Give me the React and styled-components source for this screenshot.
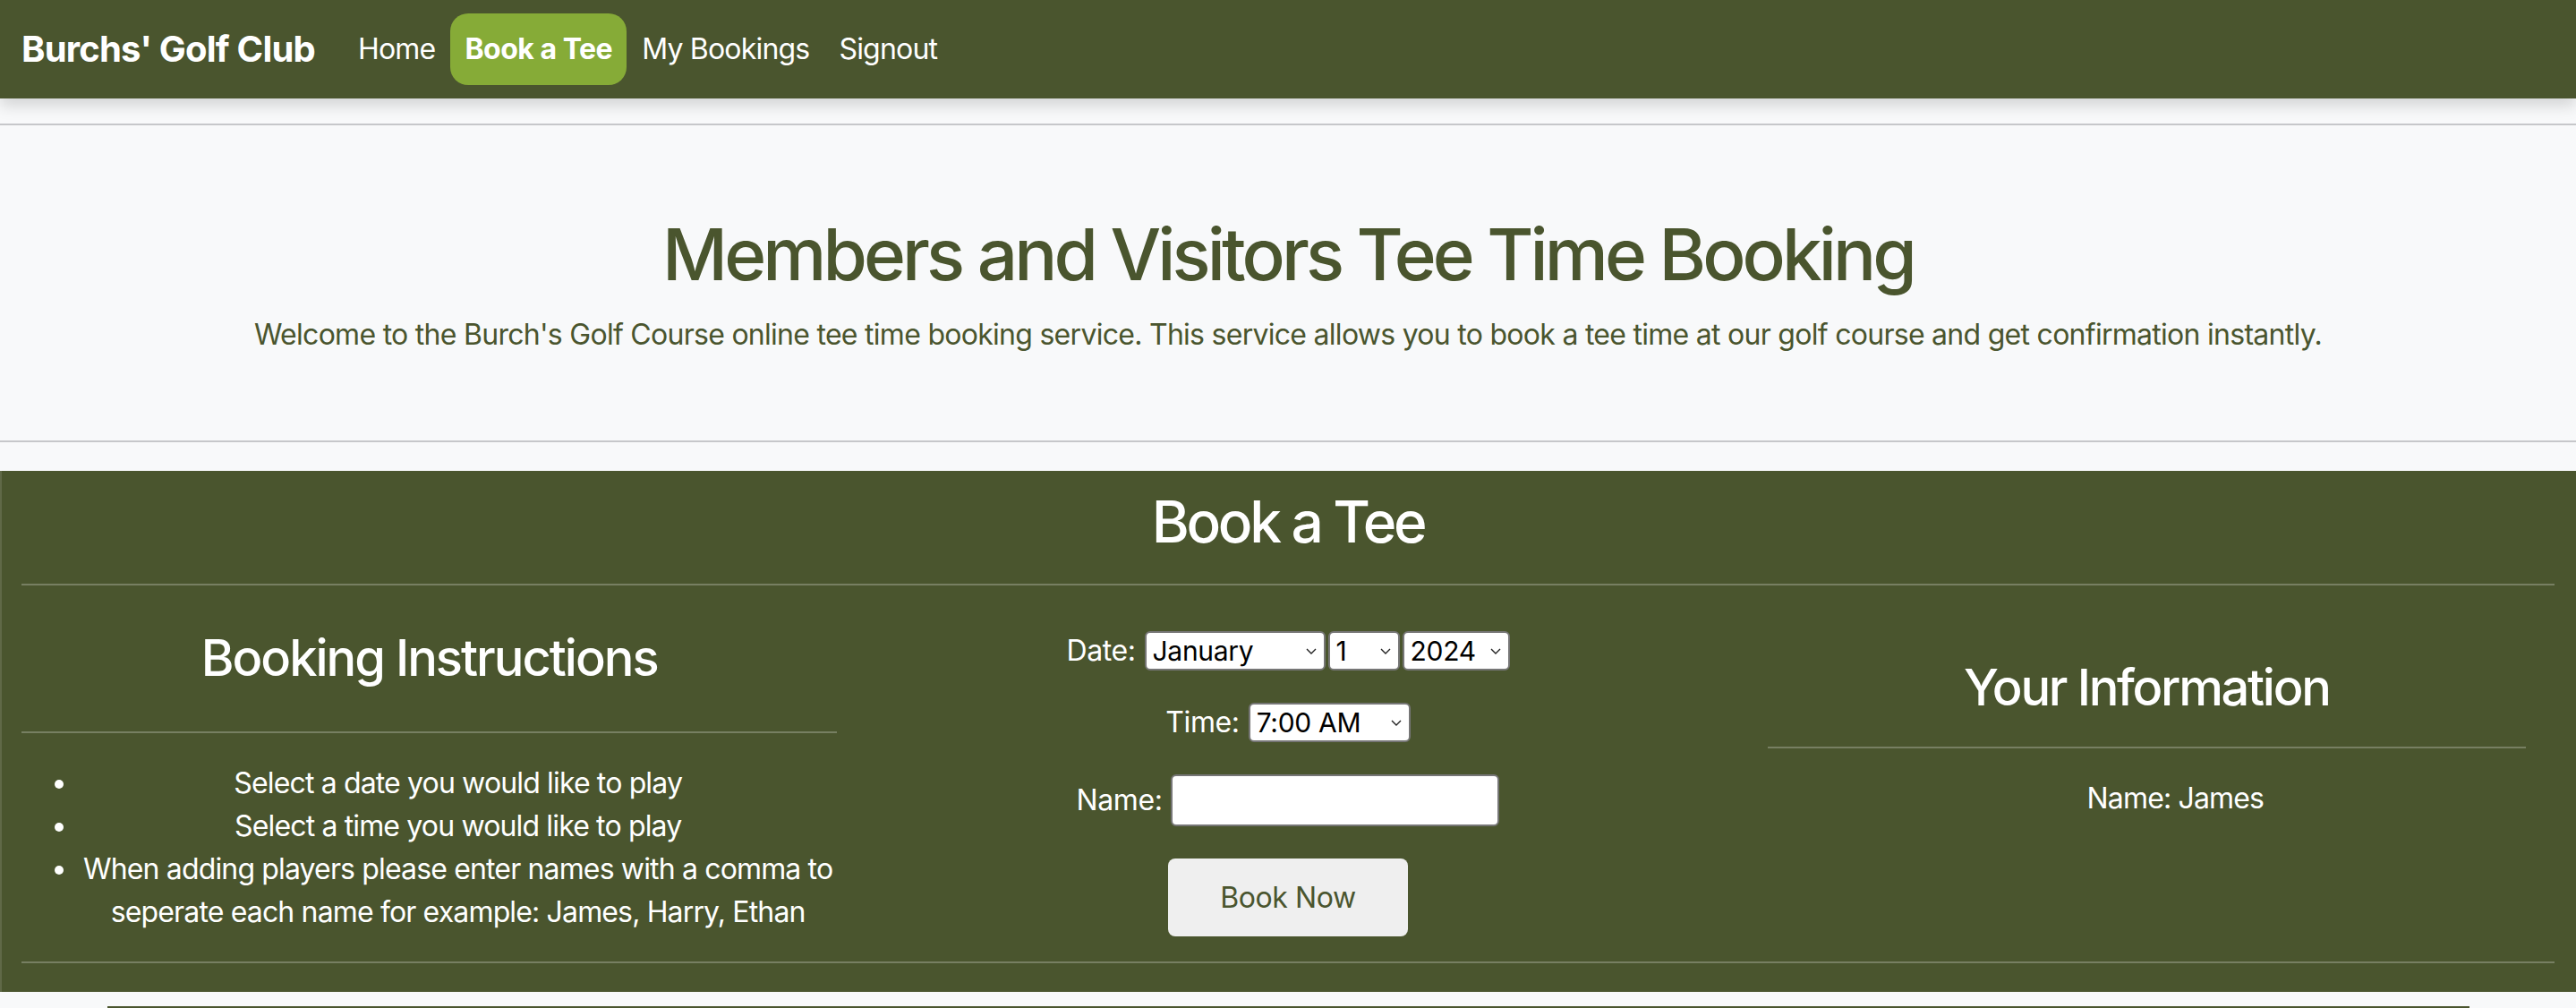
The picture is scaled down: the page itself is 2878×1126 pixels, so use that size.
import React from "react";
import styled, { createGlobalStyle } from "styled-components";

const GREEN = "#4a552e";

const GlobalStyle = createGlobalStyle`
  html, body {
    margin: 0;
    padding: 0;
    background: #f8f9fa;
    font-family: Inter, "Noto Sans", "Liberation Sans", sans-serif;
    color: ${GREEN};
  }
  * { box-sizing: border-box; }
`;

const Navbar = styled.nav`
  height: 110px;
  background: ${GREEN};
  display: flex;
  align-items: center;
  padding: 0 24px;
  box-shadow: 0 8px 16px rgba(0, 0, 0, 0.15);
  position: relative;
  z-index: 1;
`;

const Brand = styled.a`
  font-size: 40px;
  font-weight: 700;
  line-height: 60px;
  color: #fff;
  letter-spacing: -0.8px;
  margin-right: 32px;
  text-decoration: none;
`;

const NavList = styled.div`
  display: flex;
  align-items: center;
  gap: 1px;
`;

const NavLink = styled.a`
  font-size: 32px;
  line-height: 48px;
  padding: 16px;
  border-radius: 20px;
  color: #fff;
  text-decoration: none;
  letter-spacing: ${(p) => (p.$active ? "-0.5px" : "-0.8px")};
  font-weight: ${(p) => (p.$active ? 700 : 400)};
  background: ${(p) => (p.$active ? "#86ab37" : "transparent")};
`;

const Hero = styled.header`
  margin-top: 28px;
  border-top: 2px solid #c6c7ca;
  border-bottom: 2px solid #c6c7ca;
  padding: 96px 0 94px;
  text-align: center;
`;

const HeroTitle = styled.h1`
  margin: 0 0 18px;
  font-size: 80px;
  line-height: 96px;
  font-weight: 500;
  letter-spacing: -3.9px;
  color: ${GREEN};
`;

const HeroText = styled.p`
  margin: 0;
  font-size: 32px;
  line-height: 48px;
  letter-spacing: -0.72px;
  color: ${GREEN};
`;

const Booking = styled.section`
  display: flow-root;
  margin-top: 32px;
  background: ${GREEN};
  border-left: 2px solid rgba(255, 255, 255, 0.12);
  padding: 19px 24px 0 22px;
  color: #fff;
`;

const SectionTitle = styled.h2`
  margin: 0;
  font-size: 64px;
  line-height: 76.8px;
  font-weight: 500;
  letter-spacing: -3.3px;
  text-align: center;
`;

const Rule = styled.hr`
  border: 0;
  border-top: 2px solid rgba(255, 255, 255, 0.25);
  height: 0;
  margin: ${(p) => p.$m || "32px 0"};
`;

const Row = styled.div`
  display: grid;
  grid-template-columns: 1fr 1fr 1fr;
  margin: 0 -24px;
`;

const Column = styled.div`
  padding: 0 24px;
`;

const ColTitle = styled.h3`
  margin: ${(p) => p.$mt || 0}px 0 0;
  font-size: 56px;
  line-height: 67.2px;
  font-weight: 500;
  letter-spacing: ${(p) => p.$ls || "-2px"};
  text-align: center;
`;

const InfoBox = styled.div`
  margin: 49px 32px 0 32px;
`;

const List = styled.ul`
  margin: 0;
  padding-left: 64px;
  text-align: center;
  font-size: 32px;
  line-height: 48px;
  letter-spacing: -0.85px;
  list-style: ${(p) => (p.$plain ? "none" : "disc")};
`;

const FormColumn = styled(Column)`
  padding-top: 19px;
  display: flex;
  flex-direction: column;
  align-items: center;
  gap: 36px;
`;

const FieldRow = styled.div`
  display: flex;
  align-items: center;
  gap: 10px;
  font-size: 32px;
  letter-spacing: -0.4px;
`;

const Selects = styled.div`
  display: flex;
  gap: 3px;
`;

const SelectWrap = styled.div`
  position: relative;
  display: inline-flex;
`;

const Select = styled.select`
  appearance: none;
  -webkit-appearance: none;
  width: ${(p) => p.$w}px;
  height: 44px;
  border: 2px solid #767676;
  border-radius: 6px;
  background: #fff;
  color: #000;
  font-family: Inter, "Noto Sans", sans-serif;
  font-size: 30px;
  letter-spacing: -0.3px;
  padding: 0 0 0 7px;
  outline: none;
`;

const Chevron = styled.svg`
  position: absolute;
  right: 10px;
  top: 19px;
  pointer-events: none;
`;

const TextInput = styled.input`
  width: 367px;
  height: 58px;
  border: 2px solid #767676;
  border-radius: 6px;
  background: #fff;
  font-size: 30px;
  padding: 0 8px;
  outline: none;
`;

const Button = styled.button`
  width: 268px;
  height: 87px;
  border: 0;
  border-radius: 8px;
  background: #efefef;
  color: ${GREEN};
  font-family: Inter, "Noto Sans", sans-serif;
  font-size: 32px;
  letter-spacing: -0.4px;
`;

const TableTop = styled.div`
  margin: 16px 119px 0 120px;
  border-top: 2px solid ${GREEN};
  height: 40px;
`;

function Dropdown({ width, options }) {
  return (
    <SelectWrap>
      <Select $w={width} defaultValue={options[0]}>
        {options.map((o) => (
          <option key={o}>{o}</option>
        ))}
      </Select>
      <Chevron width="12" height="7" viewBox="0 0 12 7">
        <path d="M1 1l5 5 5-5" fill="none" stroke="#222" strokeWidth="1.4" />
      </Chevron>
    </SelectWrap>
  );
}

const months = [
  "January", "February", "March", "April", "May", "June",
  "July", "August", "September", "October", "November", "December",
];

export default function App() {
  return (
    <>
      <GlobalStyle />
      <Navbar>
        <Brand>Burchs' Golf Club</Brand>
        <NavList>
          <NavLink>Home</NavLink>
          <NavLink $active>Book a Tee</NavLink>
          <NavLink>My Bookings</NavLink>
          <NavLink>Signout</NavLink>
        </NavList>
      </Navbar>

      <Hero>
        <HeroTitle>Members and Visitors Tee Time Booking</HeroTitle>
        <HeroText>
          Welcome to the Burch's Golf Course online tee time booking service. This service allows you to book a tee time at our golf course and get confirmation instantly.
        </HeroText>
      </Hero>

      <Booking>
        <SectionTitle>Book a Tee</SectionTitle>
        <Rule $m="30px 0 32px" />
        <Row>
          <Column>
            <ColTitle $mt={16} $ls="-2px">Booking Instructions</ColTitle>
            <Rule $m="48px 0 32px" />
            <List>
              <li>Select a date you would like to play</li>
              <li>Select a time you would like to play</li>
              <li>When adding players please enter names with a comma to seperate each name for example: James, Harry, Ethan</li>
            </List>
          </Column>
          <FormColumn>
            <FieldRow>
              <span>Date:</span>
              <Selects>
                <Dropdown width={202} options={months} />
                <Dropdown width={80} options={Array.from({ length: 31 }, (_, i) => String(i + 1))} />
                <Dropdown width={120} options={["2024", "2025"]} />
              </Selects>
            </FieldRow>
            <FieldRow>
              <span>Time:</span>
              <Dropdown width={181} options={["7:00 AM", "7:30 AM", "8:00 AM"]} />
            </FieldRow>
            <FieldRow>
              <span>Name:</span>
              <TextInput type="text" />
            </FieldRow>
            <Button>Book Now</Button>
          </FormColumn>
          <Column>
            <InfoBox>
              <ColTitle $ls="-2.3px">Your Information</ColTitle>
              <Rule />
              <List $plain>
                <li>Name: James</li>
              </List>
            </InfoBox>
          </Column>
        </Row>
        <Rule $m="28px 0 32px" />
      </Booking>
      <TableTop />
    </>
  );
}
